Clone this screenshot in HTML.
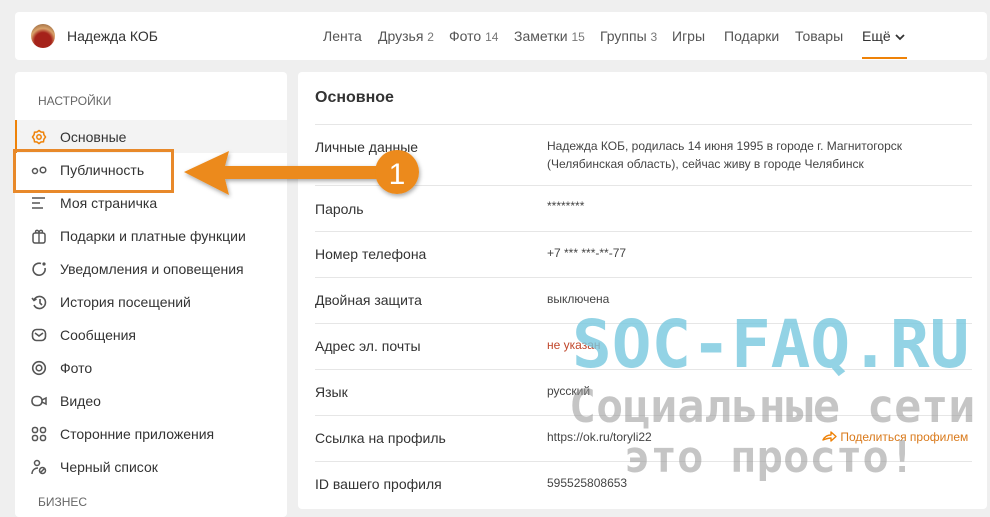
<!DOCTYPE html>
<html><head><meta charset="utf-8"><style>
*{margin:0;padding:0;box-sizing:border-box}
body{width:990px;height:512px;background:#efefef;font-family:"Liberation Sans",Arial,sans-serif;position:relative;overflow:hidden;color:#333}
.card{position:absolute;background:#fff;border-radius:4px}
.nav span{position:absolute;top:28px;font-size:14px;color:#555}
.nav small{font-size:12px;color:#777}
.mi{position:absolute;left:15px;width:272px;height:33px;font-size:14px;color:#333}
.mi .t{position:absolute;left:45px;top:9px}
.mi svg{position:absolute;left:16px;top:9px}
.row{position:absolute;left:315px;width:657px;border-top:1px solid #e6e6e6;font-size:14px}
.lbl{position:absolute;left:315px;font-size:14px;color:#333}
.val{position:absolute;left:547px;font-size:12px;color:#444;line-height:18px}
.wm{position:absolute;font-family:"DejaVu Sans Mono","Liberation Mono",monospace;font-weight:bold;white-space:nowrap}
</style></head><body>
<div class="card" style="left:15px;top:12px;width:972px;height:48px"></div>
<div style="position:absolute;left:31px;top:24px;width:24px;height:24px;border-radius:50%;background:radial-gradient(circle at 50% 70%,#a5221a 40%,#d9a36b 60%,#7a4a2a)"></div>
<div style="position:absolute;left:67px;top:28px;font-size:14px;color:#333">Надежда КОБ</div>
<div class="nav">
<span style="left:323px">Лента</span>
<span style="left:378px">Друзья <small>2</small></span>
<span style="left:449px">Фото <small>14</small></span>
<span style="left:514px">Заметки <small>15</small></span>
<span style="left:600px">Группы <small>3</small></span>
<span style="left:672px">Игры</span>
<span style="left:724px">Подарки</span>
<span style="left:795px">Товары</span>
<span style="left:862px;color:#333">Ещё <svg width="10" height="8" viewBox="0 0 10 8"><path d="M1 2l4 4 4-4" stroke="#333" stroke-width="1.8" fill="none"/></svg></span>
</div>
<div style="position:absolute;left:862px;top:57px;width:45px;height:2px;background:#ee8208"></div>

<div class="card" style="left:15px;top:72px;width:272px;height:445px"></div>
<div style="position:absolute;left:38px;top:94px;font-size:12px;color:#666">НАСТРОЙКИ</div>
<div style="position:absolute;left:15px;top:120px;width:272px;height:33px;background:#f3f3f3;border-left:2px solid #ee8208"></div>
<div class="mi" style="top:120px"><svg width="16" height="16" viewBox="0 0 16 16"><path d="M8 1.5l2 1.5 2.5.2.4 2.5 1.6 2.3-1.6 2.3-.4 2.5-2.5.2-2 1.5-2-1.5-2.5-.2-.4-2.5L1.5 8l1.6-2.3.4-2.5L6 3z" fill="none" stroke="#ee8208" stroke-width="1.5"/><circle cx="8" cy="8" r="2.2" fill="none" stroke="#ee8208" stroke-width="1.5"/></svg><span class="t">Основные</span></div>
<div class="mi" style="top:153px"><svg width="16" height="16" viewBox="0 0 16 16"><circle cx="4" cy="9" r="2.5" fill="none" stroke="#555" stroke-width="1.5"/><circle cx="12" cy="8" r="2.8" fill="none" stroke="#555" stroke-width="1.5"/></svg><span class="t">Публичность</span></div>
<div class="mi" style="top:186px"><svg width="16" height="16" viewBox="0 0 16 16"><path d="M1 3h13M1 8h8M1 13h11" stroke="#555" stroke-width="1.6"/></svg><span class="t">Моя страничка</span></div>
<div class="mi" style="top:219px"><svg width="16" height="16" viewBox="0 0 16 16"><rect x="2" y="5" width="12" height="10" rx="2" fill="none" stroke="#555" stroke-width="1.5"/><path d="M8 5v10M5 5c-2-3 3-4 3 0c0-4 5-3 3 0" fill="none" stroke="#555" stroke-width="1.4"/></svg><span class="t">Подарки и платные функции</span></div>
<div class="mi" style="top:252px"><svg width="16" height="16" viewBox="0 0 16 16"><path d="M10 2.5A6 6 0 1 0 14 7" fill="none" stroke="#555" stroke-width="1.6"/><circle cx="13" cy="3" r="1.6" fill="#555"/></svg><span class="t">Уведомления и оповещения</span></div>
<div class="mi" style="top:285px"><svg width="16" height="16" viewBox="0 0 16 16"><path d="M3 6A6 6 0 1 1 3 11M1 4l2 2.5 2.5-1.5M9 5v4l2 2" fill="none" stroke="#555" stroke-width="1.6"/></svg><span class="t">История посещений</span></div>
<div class="mi" style="top:318px"><svg width="16" height="16" viewBox="0 0 16 16"><rect x="1.5" y="2.5" width="13" height="11" rx="4" fill="none" stroke="#555" stroke-width="1.6"/><path d="M4 6l4 3 4-3" fill="none" stroke="#555" stroke-width="1.6"/></svg><span class="t">Сообщения</span></div>
<div class="mi" style="top:351px"><svg width="16" height="16" viewBox="0 0 16 16"><circle cx="8" cy="8" r="6.3" fill="none" stroke="#555" stroke-width="1.6"/><circle cx="8" cy="8" r="2.8" fill="none" stroke="#555" stroke-width="1.6"/></svg><span class="t">Фото</span></div>
<div class="mi" style="top:384px"><svg width="16" height="16" viewBox="0 0 16 16"><rect x="1" y="3.5" width="10" height="9" rx="4" fill="none" stroke="#555" stroke-width="1.6"/><path d="M11 7l4-2v6l-4-2" fill="none" stroke="#555" stroke-width="1.5"/></svg><span class="t">Видео</span></div>
<div class="mi" style="top:417px"><svg width="16" height="16" viewBox="0 0 16 16"><g fill="none" stroke="#555" stroke-width="1.5"><rect x="1.5" y="1.5" width="5" height="5" rx="2"/><rect x="9.5" y="1.5" width="5" height="5" rx="2"/><rect x="1.5" y="9.5" width="5" height="5" rx="2"/><rect x="9.5" y="9.5" width="5" height="5" rx="2"/></g></svg><span class="t">Сторонние приложения</span></div>
<div class="mi" style="top:450px"><svg width="16" height="16" viewBox="0 0 16 16"><g fill="none" stroke="#555" stroke-width="1.5"><circle cx="6" cy="4" r="2.5"/><path d="M1 15c0-4 3-6 6-6"/><circle cx="11.5" cy="11.5" r="3"/><path d="M9.5 13.5l4-4"/></g></svg><span class="t">Черный список</span></div>
<div style="position:absolute;left:38px;top:495px;font-size:12px;color:#666">БИЗНЕС</div>

<div class="card" style="left:298px;top:72px;width:689px;height:437px"></div>
<div style="position:absolute;left:315px;top:89px;font-size:16px;font-weight:bold;color:#333">Основное</div>
<div class="row" style="top:124px"></div><div class="row" style="top:185px"></div><div class="row" style="top:231px"></div><div class="row" style="top:277px"></div><div class="row" style="top:323px"></div><div class="row" style="top:369px"></div><div class="row" style="top:415px"></div><div class="row" style="top:461px"></div>
<div class="lbl" style="top:139px">Личные данные</div>
<div class="val" style="top:137px">Надежда КОБ, родилась 14 июня 1995 в городе г. Магнитогорск<br>(Челябинская область), сейчас живу в городе Челябинск</div>
<div class="lbl" style="top:201px">Пароль</div><div class="val" style="top:197px">********</div>
<div class="lbl" style="top:246px">Номер телефона</div><div class="val" style="top:244px">+7 *** ***-**-77</div>
<div class="lbl" style="top:292px">Двойная защита</div><div class="val" style="top:290px">выключена</div>
<div class="lbl" style="top:338px">Адрес эл. почты</div><div class="val" style="top:336px;color:#c0462a">не указан</div>
<div class="lbl" style="top:384px">Язык</div><div class="val" style="top:382px">русский</div>
<div class="lbl" style="top:430px">Ссылка на профиль</div><div class="val" style="top:428px">https://ok.ru/toryli22</div>
<div class="val" style="left:822px;top:428px;color:#d9791a"><svg width="15" height="11" viewBox="0 0 15 11" style="vertical-align:-1px"><path d="M1 9c2-4 5-5 8-5V1l5 4.5-5 4.5V7c-3 0-5 1-8 2z" fill="none" stroke="#ee8208" stroke-width="1.4" stroke-linejoin="round"/></svg> Поделиться профилем</div>
<div class="lbl" style="top:476px">ID вашего профиля</div><div class="val" style="top:474px">595525808653</div>

<div class="wm" style="left:572px;top:306px;font-size:66px;color:rgba(120,200,222,0.8)">SOC-FAQ.RU</div>
<div class="wm" style="left:569px;top:380px;font-size:45px;color:rgba(150,150,150,0.55)">Социальные сети</div>
<div class="wm" style="left:624px;top:432px;font-size:44px;color:rgba(150,150,150,0.55)">это просто!</div>

<div style="position:absolute;left:13px;top:149px;width:161px;height:44px;border:3px solid #e8892a"></div>
<svg style="position:absolute;left:180px;top:145px" width="245" height="55" viewBox="180 145 245 55">
<defs><filter id="s"><feDropShadow dx="1" dy="2" stdDeviation="2" flood-opacity="0.35"/></filter></defs>
<g filter="url(#s)" fill="#ec8a1a">
<path d="M184 172L229 151L225 166H395V179H225L229 195Z"/>
<circle cx="397" cy="172" r="22"/>
</g>
<text x="397" y="184" text-anchor="middle" font-family="Liberation Sans,sans-serif" font-size="30" fill="#fff">1</text>
</svg>
</body></html>
